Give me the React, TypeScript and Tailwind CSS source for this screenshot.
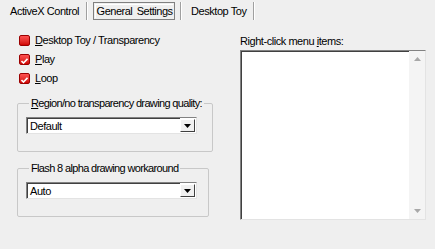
import React from 'react'

const font = { fontFamily: '"Liberation Sans", Arial, sans-serif' }

function RedBox({ checked }: { checked: boolean }) {
  return (
    <span className="relative inline-flex h-[11px] w-[11px] items-center justify-center rounded-[2px] border border-[#9a0000] bg-gradient-to-b from-[#ff5050] to-[#d00000]">
      {checked && (
        <svg width="7" height="6" viewBox="0 0 7 6" className="absolute top-[3px]">
          <path d="M0.5 3 L2.5 5 L6.5 0.8" stroke="#fff" strokeWidth="1.6" fill="none" />
        </svg>
      )}
    </span>
  )
}

function Check({ label, accel, checked }: { label: string; accel: string; checked: boolean }) {
  return (
    <div className="flex h-[19px] items-center gap-[5px]">
      <RedBox checked={checked} />
      <span className="text-black">
        <span className="underline">{accel}</span>
        {label}
      </span>
    </div>
  )
}

function Combo({ value }: { value: string }) {
  return (
    <div className="flex h-[17px] w-[171px] items-center border border-t-[#828282] border-l-[#828282] border-r-[#e3e3e3] border-b-[#e3e3e3] bg-white">
      <div className="flex h-full flex-1 items-center border-t border-l border-t-[#404040] border-l-[#404040]">
        <span className="pl-[2px] text-black">{value}</span>
      </div>
      <div className="my-[1px] mr-[1px] flex h-[13px] w-[15px] items-center justify-center border border-t-white border-l-white border-r-[#404040] border-b-[#404040] bg-[#f0f0f0]">
        <svg width="7" height="4" viewBox="0 0 7 4">
          <path d="M0 0 H7 L3.5 4 Z" fill="#000" />
        </svg>
      </div>
    </div>
  )
}

function Group({ legend, accel, value }: { legend: string; accel?: string; value: string }) {
  return (
    <fieldset className="h-[55px] w-[192px] rounded-[2px] border border-[#c8c8c8] px-[8px] pt-[8px]">
      <legend className="ml-[3px] whitespace-nowrap px-[2px] leading-[12px] tracking-[-0.65px] text-black">
        {accel && <span className="underline">{accel}</span>}
        {legend}
      </legend>
      <Combo value={value} />
    </fieldset>
  )
}

export default function App() {
  return (
    <div className="h-[249px] w-[435px] overflow-hidden bg-[#efefef] text-[11px] tracking-[-0.45px]" style={font}>
      <div className="flex h-[23px] items-start pt-[2px] text-black">
        <div className="flex h-[18px] items-center pl-[10px] pr-[7px]">ActiveX Control</div>
        <div className="h-[18px] w-[2px] border-l border-[#a0a0a0] bg-white" />
        <div className="ml-[5px] flex h-[18px] w-[82px] items-center border border-[#808080] p-[1px]">
          <div className="flex h-full w-full items-center justify-center border-t border-l border-white tracking-[-0.5px] [word-spacing:2px]">General Settings</div>
        </div>
        <div className="ml-[5px] h-[18px] w-[2px] border-l border-[#a0a0a0] bg-white" />
        <div className="flex h-[18px] items-center pl-[9px] pr-[7px]">Desktop Toy</div>
        <div className="h-[18px] w-[2px] border-l border-[#a0a0a0] bg-white" />
      </div>

      <div className="flex">
        <div className="w-[222px] pl-[19px] pt-[8px]">
          <Check accel="D" label="esktop Toy / Transparency" checked={false} />
          <Check accel="P" label="lay" checked />
          <Check accel="L" label="oop" checked />
          <div className="ml-[-2px] mt-[9px]">
            <Group accel="R" legend="egion/no transparency drawing quality:" value="Default" />
          </div>
          <div className="ml-[-2px] mt-[10px]">
            <Group legend="Flash 8 alpha drawing workaround" value="Auto" />
          </div>
        </div>

        <div className="pl-[18px] pt-[12px]">
          <div className="h-[15px] leading-[12px] text-black">
            Right-click menu <span className="underline">i</span>tems:
          </div>
          <div className="flex h-[170px] w-[186px] border border-t-[#828282] border-l-[#828282] border-r-[#e3e3e3] border-b-[#e3e3e3] bg-white">
            <div className="flex-1 border-t border-l border-t-[#404040] border-l-[#404040]" />
            <div className="flex w-[16px] flex-col items-center justify-between bg-[#f4f4f4] py-[6px]">
              <svg width="7" height="4" viewBox="0 0 7 4">
                <path d="M0 4 H7 L3.5 0 Z" fill="#a8a8a8" />
              </svg>
              <svg width="7" height="4" viewBox="0 0 7 4">
                <path d="M0 0 H7 L3.5 4 Z" fill="#a8a8a8" />
              </svg>
            </div>
          </div>
        </div>
      </div>
    </div>
  )
}
